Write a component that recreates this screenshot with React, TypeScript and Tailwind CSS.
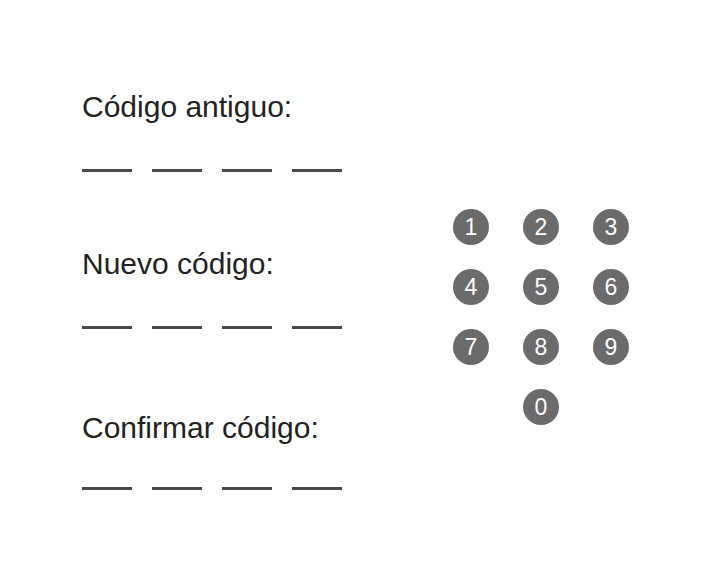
const keys = ["1", "2", "3", "4", "5", "6", "7", "8", "9"];

function CodeField({ label, className, lineGap }: { label: string; className?: string; lineGap: string }) {
  return (
    <div className={className}>
      <p className="text-[30px] leading-[30px] text-[#222222]">{label}</p>
      <div className={["flex gap-[20px]", lineGap].join(" ")}>
        {[0, 1, 2, 3].map((i) => (
          <span key={i} className="block h-[3px] w-[50px] bg-[#4a4a4a]" />
        ))}
      </div>
    </div>
  );
}

function Key({ n }: { n: string }) {
  return (
    <button className="flex size-[36px] items-center justify-center rounded-full bg-[#6b6b6b] pt-[1px] text-[23px] leading-none text-white">
      {n}
    </button>
  );
}

export default function App() {
  return (
    <div
      className="flex min-h-screen w-full bg-white pl-[82px]"
      style={{ fontFamily: '"Liberation Sans", Arial, sans-serif' }}
    >
      <div className="w-[371px] pt-[92px]">
        <CodeField label="Código antiguo:" lineGap="mt-[47px]" />
        <CodeField label="Nuevo código:" className="mt-[77px]" lineGap="mt-[47px]" />
        <CodeField label="Confirmar código:" className="mt-[84px]" lineGap="mt-[44px]" />
      </div>
      <div className="pt-[209px]">
        <div className="grid grid-cols-[36px_36px_36px] gap-x-[34px] gap-y-[24px]">
          {keys.map((k) => (
            <Key key={k} n={k} />
          ))}
          <span />
          <Key n="0" />
        </div>
      </div>
    </div>
  );
}
